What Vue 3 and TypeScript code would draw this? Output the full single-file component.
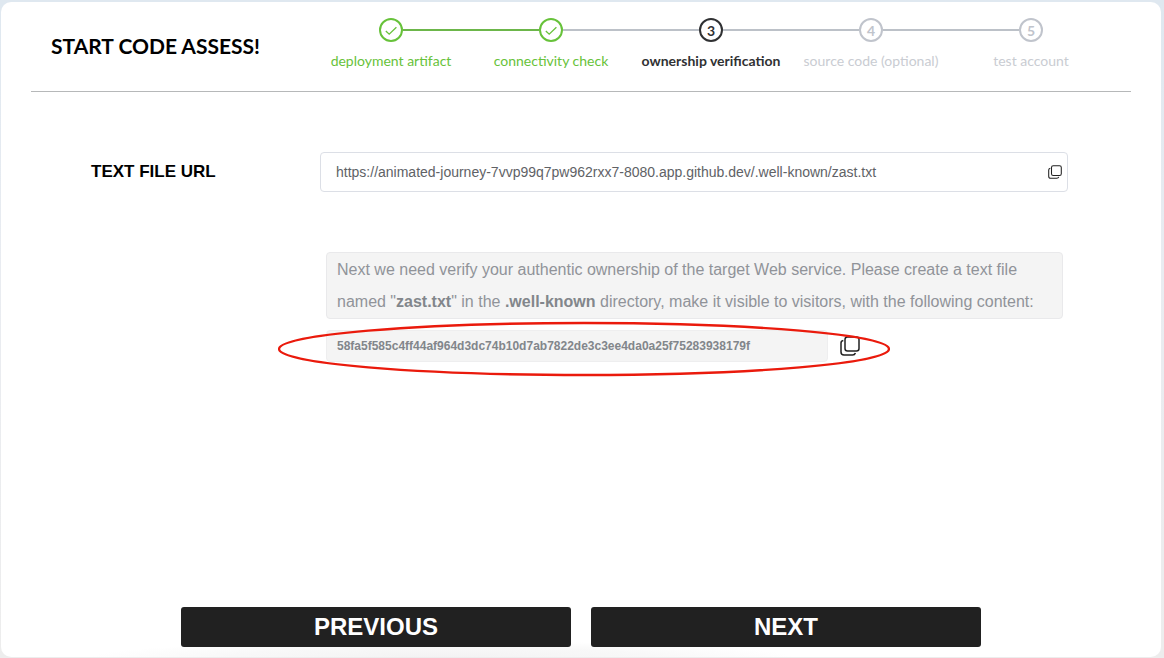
<script setup lang="ts">
import { ref } from 'vue'

type StepState = 'done' | 'active' | 'waiting'

interface Step {
  label: string
  state: StepState
}

const steps: Step[] = [
  { label: 'deployment artifact', state: 'done' },
  { label: 'connectivity check', state: 'done' },
  { label: 'ownership verification', state: 'active' },
  { label: 'source code (optional)', state: 'waiting' },
  { label: 'test account', state: 'waiting' },
]

const fileUrl = ref('https://animated-journey-7vvp99q7pw962rxx7-8080.app.github.dev/.well-known/zast.txt')
const token = '58fa5f585c4ff44af964d3dc74b10d7ab7822de3c3ee4da0a25f75283938179f'

function copy(text: string): void {
  void navigator.clipboard?.writeText(text)
}
</script>

<template>
  <div class="page">
    <main class="card">
      <header class="header">
        <h1 class="title">START CODE ASSESS!</h1>
        <ol class="steps">
          <li v-for="(step, i) in steps" :key="step.label" class="step" :class="step.state">
            <div class="track">
              <span class="line" :class="{ hidden: i === 0, filled: i === 1 }"></span>
              <span class="circle">
                <svg v-if="step.state === 'done'" width="14" height="14" viewBox="0 0 14 14" aria-hidden="true">
                  <path d="M1.8 8 L5.2 11.2 L12.4 4.2" fill="none" stroke="currentColor" stroke-width="1.3" />
                </svg>
                <template v-else>{{ i + 1 }}</template>
              </span>
              <span class="line" :class="{ hidden: i === steps.length - 1, filled: i === 0 }"></span>
            </div>
            <span class="step-label">{{ step.label }}</span>
          </li>
        </ol>
      </header>

      <section class="content">
        <label class="field-label" for="file-url">TEXT FILE URL</label>
        <div class="url-box">
          <input id="file-url" v-model="fileUrl" class="url-input" type="text" readonly />
          <button class="copy small" type="button" aria-label="Copy URL" @click="copy(fileUrl)">
            <svg viewBox="0 0 20 20" fill="none" stroke="currentColor" stroke-width="1.5" aria-hidden="true">
              <rect x="5" y="1" width="14" height="14" rx="2.5" />
              <path d="M3.3 4.5 C1.8 4.8 1 5.6 1 7 V16 C1 18 2 19 4 19 H12.5 C14 19 15 18.3 15.4 17" />
            </svg>
          </button>
        </div>

        <div class="instructions">
          <p class="notice">
            Next we need verify your authentic ownership of the target Web service. Please create a text file
            named "<strong>zast.txt</strong>" in the <strong>.well-known</strong> directory, make it visible to
            visitors, with the following content:
          </p>
          <div class="token-row">
            <code class="token">{{ token }}</code>
            <button class="copy" type="button" aria-label="Copy content" @click="copy(token)">
              <svg viewBox="0 0 20 20" fill="none" stroke="currentColor" stroke-width="1.5" aria-hidden="true">
                <rect x="5" y="1" width="14" height="14" rx="2.5" />
                <path d="M3.3 4.5 C1.8 4.8 1 5.6 1 7 V16 C1 18 2 19 4 19 H12.5 C14 19 15 18.3 15.4 17" />
              </svg>
            </button>
            <svg class="highlight" viewBox="0 0 612 56" aria-hidden="true">
              <ellipse cx="306" cy="28" rx="305" ry="26" fill="none" stroke="#ea1a0c" stroke-width="2.4" />
            </svg>
          </div>
        </div>
      </section>

      <footer class="actions">
        <button class="action" type="button">PREVIOUS</button>
        <button class="action" type="button">NEXT</button>
      </footer>
    </main>
  </div>
</template>

<style>
body {
  margin: 0;
}
</style>

<style scoped>
.page {
  box-sizing: border-box;
  display: flex;
  min-height: 100vh;
  padding: 2px 3px 1px 1px;
  background: linear-gradient(#dfe8f0, #e9ecf1 40%, #ededed);
  font-family: "Liberation Sans", Arial, sans-serif;
}

.card {
  box-sizing: border-box;
  display: flex;
  flex: 1;
  flex-direction: column;
  min-width: 0;
  padding: 0 30px 10px;
  border-radius: 10px;
  background: radial-gradient(ellipse 350px 16px at 38% 100%, #f3f3f3, #f8f8f8 60%, #fff) #fff;
}

.header {
  box-sizing: border-box;
  display: flex;
  height: 90px;
  padding: 0 20px;
  border-bottom: 1px solid #b6b8b9;
}

.title {
  flex: none;
  width: 260px;
  margin: 0;
  color: #000;
  font: 700 21px/88px Lato, sans-serif;
}

.steps {
  display: flex;
  flex: 1;
  margin: 0;
  padding: 16px 0 0;
  list-style: none;
  font-family: Lato, sans-serif;
}

.step {
  display: flex;
  flex: 1 1 0;
  flex-direction: column;
  align-items: center;
  gap: 8px;
  min-width: 0;
  color: #c0c4cc;
}

.step.done {
  color: #67c23a;
}

.step.active {
  color: #303133;
}

.track {
  display: flex;
  align-items: center;
  width: 100%;
}

.line {
  flex: 1;
  height: 2px;
  background: #bcc1c8;
}

.line.filled {
  background: #6cb64a;
}

.line.hidden {
  visibility: hidden;
}

.circle {
  box-sizing: border-box;
  display: flex;
  align-items: center;
  justify-content: center;
  width: 24px;
  height: 24px;
  border: 2px solid currentColor;
  border-radius: 50%;
  font-size: 14px;
  font-weight: 700;
}

.step-label {
  font-size: 14px;
  line-height: 22px;
  white-space: nowrap;
}

.active .step-label {
  font-weight: 700;
}

.waiting .step-label {
  color: #c9ccd2;
}

.content {
  display: grid;
  grid-template-columns: 229px 1fr;
  align-items: center;
  row-gap: 60px;
  padding: 60px 63px 0 60px;
}

.field-label {
  color: #000;
  font-size: 17px;
  font-weight: 700;
}

.url-box {
  box-sizing: border-box;
  display: flex;
  align-items: center;
  height: 40px;
  padding: 0 5px 0 15px;
  border: 1px solid #dcdfe6;
  border-radius: 4px;
}

.url-input {
  flex: 1;
  min-width: 0;
  padding: 0;
  border: 0;
  outline: 0;
  background: transparent;
  color: #606266;
  font: 14px/20px "Liberation Sans", Arial, sans-serif;
}

.copy {
  display: flex;
  flex: none;
  width: 20px;
  height: 20px;
  padding: 0;
  border: 0;
  background: none;
  color: #222;
  cursor: pointer;
}

.copy.small {
  width: 14px;
  height: 14px;
}

.copy svg {
  width: 100%;
  height: 100%;
}

.instructions {
  grid-column: 2;
  padding: 0 5px 0 6px;
}

.notice {
  margin: 0;
  padding: 1px 10px 0;
  border: 1px solid #e9e9eb;
  border-radius: 4px;
  background: #f4f4f4;
  color: #909399;
  font-size: 16px;
  line-height: 32px;
}

.notice strong {
  color: #82868b;
}

.token-row {
  position: relative;
  display: flex;
  align-items: center;
  gap: 12px;
  margin-top: 11px;
}

.token {
  box-sizing: border-box;
  width: 502px;
  padding: 0 10px;
  border: 1px solid #eeeeef;
  border-radius: 4px;
  background: #f4f4f4;
  color: #82868b;
  font: 700 12px/30px "Liberation Sans", Arial, sans-serif;
}

/* Red ring laid over the token and its copy button */
.highlight {
  position: absolute;
  top: -9px;
  left: -48px;
  width: 612px;
  height: 56px;
  pointer-events: none;
}

.actions {
  display: flex;
  gap: 20px;
  width: 100%;
  max-width: 800px;
  margin: auto auto 0;
}

.action {
  flex: 1;
  height: 40px;
  padding: 0;
  border: 0;
  border-radius: 3px;
  background: #212121;
  color: #fff;
  font: 700 24px/40px "Liberation Sans", Arial, sans-serif;
  cursor: pointer;
}
</style>
